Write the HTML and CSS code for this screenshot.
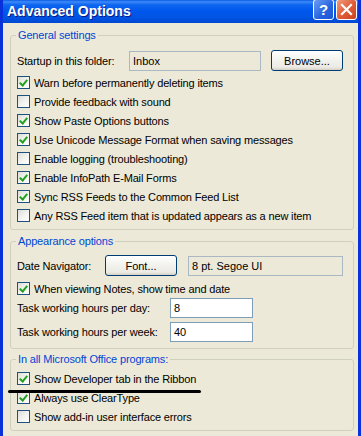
FILE: index.html
```html
<!DOCTYPE html>
<html lang="en">
<head>
  <meta charset="UTF-8" />
  <title>Advanced Options</title>
  <link rel="stylesheet" href="styles.css">
</head>
<body>
  <div class="window">
    <div class="titlebar">
      <span class="title">Advanced Options</span>
      <div class="tb-buttons">
        <span class="tb-btn help">?</span>
        <span class="tb-btn close">
          <svg width="13" height="13" viewBox="0 0 13 13"><path d="M2 2 L11 11 M11 2 L2 11" stroke="#fff" stroke-width="2.2" stroke-linecap="square"/></svg>
        </span>
      </div>
    </div>

    <div class="content">
      <!-- General settings -->
      <fieldset class="group general">
        <legend>General settings</legend>
        <div class="field-row">
          <span class="lbl startup-lbl">Startup in this folder:</span>
          <input class="textbox readonly startup-box" type="text" value="Inbox" readonly>
          <button class="xp-btn browse">Browse...</button>
        </div>
        <label class="check"><span class="box on"></span>Warn before permanently deleting items</label>
        <label class="check"><span class="box"></span>Provide feedback with sound</label>
        <label class="check"><span class="box on"></span>Show Paste Options buttons</label>
        <label class="check"><span class="box on"></span>Use Unicode Message Format when saving messages</label>
        <label class="check"><span class="box"></span>Enable logging (troubleshooting)</label>
        <label class="check"><span class="box on"></span>Enable InfoPath E-Mail Forms</label>
        <label class="check"><span class="box on"></span>Sync RSS Feeds to the Common Feed List</label>
        <label class="check"><span class="box"></span>Any RSS Feed item that is updated appears as a new item</label>
      </fieldset>

      <!-- Appearance options -->
      <fieldset class="group appearance">
        <legend>Appearance options</legend>
        <div class="field-row date-row">
          <span class="lbl date-lbl">Date Navigator:</span>
          <button class="xp-btn font-btn">Font...</button>
          <input class="textbox readonly font-box" type="text" value="8 pt. Segoe UI" readonly>
        </div>
        <label class="check notes"><span class="box on"></span>When viewing Notes, show time and date</label>
        <div class="field-row hours">
          <span class="lbl hours-lbl">Task working hours per day:</span>
          <input class="textbox hours-box" type="text" value="8">
        </div>
        <div class="field-row hours week">
          <span class="lbl hours-lbl">Task working hours per week:</span>
          <input class="textbox hours-box" type="text" value="40">
        </div>
      </fieldset>

      <!-- Office wide -->
      <fieldset class="group office">
        <legend>In all Microsoft Office programs:</legend>
        <label class="check"><span class="box on"></span>Show Developer tab in the Ribbon</label>
        <label class="check"><span class="box on"></span>Always use ClearType</label>
        <label class="check"><span class="box"></span>Show add-in user interface errors</label>
        <span class="marker"></span>
      </fieldset>
    </div>
  </div>
</body>
</html>
```

FILE: styles.css
```css
*{box-sizing:border-box;}
html,body{margin:0;padding:0;}
body{
  font-family:"Liberation Sans",Arial,sans-serif;
  font-size:11px;
  letter-spacing:-0.15px;
  color:#000;
  background:#ece9d8;
}
.window{
  width:361px;height:436px;overflow:hidden;
  background:#ece9d8;
  border-left:3px solid #0831d9;
  border-right:3px solid #0831d9;
  display:flex;flex-direction:column;
}
.titlebar{
  height:23px;flex:none;
  margin:0 -3px;
  display:flex;align-items:center;justify-content:space-between;
  padding:0 4px 0 7px;
  background:linear-gradient(#0a5ce6 0%,#3d8af7 8%,#1167f0 20%,#0058ee 45%,#0054e3 75%,#0048d2 100%);
}
.title{
  color:#fff;font-weight:bold;font-size:14px;
  letter-spacing:0;
  text-shadow:1px 1px 0 #0a1883;
  margin-top:-1px;
}
.tb-buttons{display:flex;gap:2px;margin-top:-4px;}
.tb-btn{
  width:21px;height:21px;
  border:1px solid #fff;border-radius:3px;
  display:flex;align-items:center;justify-content:center;
  color:#fff;font-weight:bold;font-size:15px;
}
.help{background:linear-gradient(135deg,#6b9cf5,#2663de 60%,#1c55d6);}
.close{background:linear-gradient(135deg,#f09a7a,#e05a35 55%,#c8441f);}

.content{flex:1;padding:0 4px 0 7px;}

.group{
  border:1px solid #d0d0bf;
  border-radius:3px;
  margin:0;
  padding:0 6px 4px 6px;
  min-width:0;
}
.group legend{
  color:#0046d5;
  padding:0 2px;
  margin-left:-1px;
  line-height:13px;
}
.general{margin-top:6px;padding-top:8px;}
.appearance{margin-top:5px;padding-top:7px;padding-bottom:6px;}
.office{margin-top:4px;padding-top:3px;position:relative;}

.field-row{display:flex;align-items:center;height:21px;}
.lbl{flex:none;}
.startup-lbl{width:112px;}
.date-lbl{width:88px;}
.hours-lbl{width:153px;}

.textbox{
  font:inherit;color:#000;
  height:20px;
  border:1px solid #7f9db9;
  background:#fff;
  padding:0 3px;
  outline:none;
}
.textbox.readonly{background:#ece9d8;border-color:#a9b8c2;}
.startup-box{width:132px;margin-right:10px;}
.font-box{width:155px;margin-left:11px;height:20px;}
.hours-box{width:83px;}
.hours{height:20px;}
.hours.week{margin-top:4px;}

.xp-btn{
  font:inherit;color:#000;
  width:72px;height:21px;
  border:1px solid #003c74;border-radius:3px;
  background:linear-gradient(#ffffff 0%,#f4f4f0 40%,#ebeae4 85%,#d6d0c5 100%);
  padding:0;
}

.check{
  display:flex;align-items:center;
  height:19px;
  white-space:nowrap;
}
.general .field-row{margin-bottom:2px;}
.notes{margin-top:3px;}
.box{
  flex:none;
  width:13px;height:13px;margin-right:4px;
  border:1px solid #1c5180;
  background:linear-gradient(135deg,#dcdcd7 0%,#f2f2ee 50%,#ffffff 100%);
  display:flex;align-items:center;justify-content:center;
}
.box.on::after{
  content:"";
  width:3px;height:6px;
  border:solid #21a121;border-width:0 2.5px 2.5px 0;
  transform:rotate(40deg);
  margin-top:-2px;
}

.marker{
  position:absolute;
  left:-3px;top:24px;
  width:193px;height:3px;
  background:#000;border-radius:2px;
}
```
